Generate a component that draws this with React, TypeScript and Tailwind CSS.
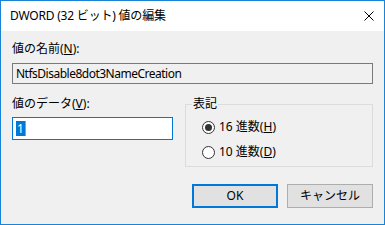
import React from "react";

const font = { fontFamily: '"Noto Sans", "Noto Sans CJK JP", sans-serif' };

function Radio({ checked, label, accel }: { checked: boolean; label: string; accel: string }) {
  return (
    <div className="flex items-center h-[16px] gap-[4px]">
      <div className="w-[13px] h-[13px] rounded-full border border-[#333333] bg-white flex items-center justify-center">
        {checked && <div className="w-[7px] h-[7px] rounded-full bg-[#333333]" />}
      </div>
      <span>
        {label}(<span className="underline">{accel}</span>)
      </span>
    </div>
  );
}

export default function App() {
  return (
    <div
      className="w-[385px] h-[225px] border border-[#1883d7] flex flex-col text-[12px] leading-[16px] text-black overflow-hidden"
      style={font}
    >
      <div className="h-[30px] bg-white flex items-center justify-between pl-[9px] pr-[10px]">
        <span className="text-[12px] tracking-[-0.2px]">DWORD (32 ビット) 値の編集</span>
        <svg width="10" height="10" viewBox="0 0 10 10" className="block">
          <path d="M0.5 0.5 L9.5 9.5 M9.5 0.5 L0.5 9.5" stroke="#000" strokeWidth="1" />
        </svg>
      </div>
      <div className="flex-1 bg-[#f0f0f0] px-[11px] pt-[10px] flex flex-col">
        <div>
          値の名前(<span className="underline">N</span>):
        </div>
        <div className="mt-[6px] h-[21px] border border-[#7a7a7a] bg-[#f0f0f0] flex items-center pl-[3px] tracking-[-0.5px]">
          NtfsDisable8dot3NameCreation
        </div>
        <div className="mt-[12px] flex gap-[12px]">
          <div className="w-[161px] flex flex-col">
            <div>
              値のデータ(<span className="underline">V</span>):
            </div>
            <div className="mt-[5px] h-[23px] border border-[#0078d7] bg-white flex items-center pl-[3px]">
              <span className="bg-[#0078d7] text-white leading-[15px] px-[1px]">1</span>
              <span className="w-[1px] h-[15px] bg-[#f08a24]" />
            </div>
          </div>
          <fieldset className="flex-1 border border-[#dcdcdc] px-0 pt-0 pb-[6px] m-0 min-w-0">
            <legend className="ml-[6px] px-[1px] leading-[16px]">表記</legend>
            <div className="pl-[16px] pt-[7px] flex flex-col gap-[9px]">
              <Radio checked label="16 進数" accel="H" />
              <Radio checked={false} label="10 進数" accel="D" />
            </div>
          </fieldset>
        </div>
        <div className="mt-[17px] flex justify-end gap-[9px]">
          <button className="w-[86px] h-[24px] border-2 border-[#0078d7] bg-[#e1e1e1] flex items-center justify-center">
            OK
          </button>
          <button className="w-[86px] h-[24px] border border-[#adadad] bg-[#e1e1e1] flex items-center justify-center">
            キャンセル
          </button>
        </div>
      </div>
    </div>
  );
}
